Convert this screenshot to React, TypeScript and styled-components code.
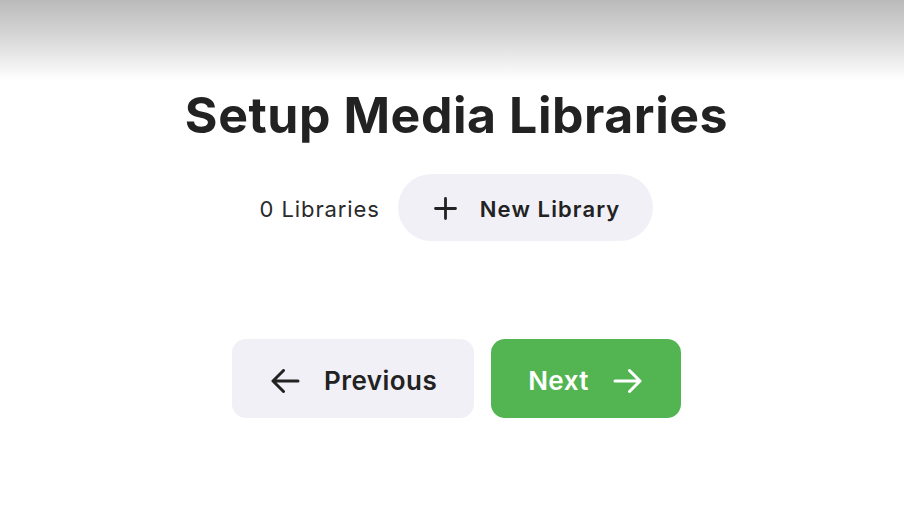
import styled, { createGlobalStyle } from 'styled-components';

const GlobalStyle = createGlobalStyle`
	html, body {
		margin: 0;
		padding: 0;
		background: #ffffff;
		font-family: Inter, 'Noto Sans', sans-serif;
		color: #212121;
	}
`;

const Page = styled.div`
	display: flex;
	flex-direction: column;
	width: 904px;
	height: 528px;
	overflow: hidden;
`;

const TopFade = styled.div`
	height: 80px;
	background: linear-gradient(180deg, #bababa 0%, #d6d6d6 45%, #f4f4f4 85%, #ffffff 100%);
`;

const Content = styled.div`
	display: flex;
	flex-direction: column;
	align-items: center;
	padding-left: 9px;
`;

const Title = styled.h1`
	margin: 6px 0 0 0;
	font-size: 50px;
	line-height: 58px;
	font-weight: 700;
	letter-spacing: 0.55px;
	color: #222222;
`;

const LibraryRow = styled.div`
	display: flex;
	align-items: center;
	gap: 18px;
	margin-top: 30px;
`;

const Count = styled.span`
	padding-top: 2px;
	font-size: 22px;
	letter-spacing: 0.9px;
	color: #2a2a2a;
`;

const Button = styled.button<{ $variant?: 'primary' | 'secondary' }>`
	display: flex;
	align-items: center;
	box-sizing: border-box;
	border: none;
	font-family: inherit;
	font-weight: 600;
	cursor: pointer;
	background: ${(props) => (props.$variant === 'primary' ? '#52b552' : '#f1f0f6')};
	color: ${(props) => (props.$variant === 'primary' ? '#ffffff' : '#222222')};
`;

const PillButton = styled(Button)`
	height: 67px;
	padding: 2px 33px 0 36px;
	gap: 23px;
	border-radius: 34px;
	font-size: 22px;
	letter-spacing: 1.1px;
`;

const NavRow = styled.div`
	display: flex;
	gap: 17px;
	margin-top: 98px;
`;

const NavButton = styled(Button)`
	height: 79px;
	padding: ${(props) => (props.$variant === 'primary' ? '4px 39px 0 37px' : '4px 37px 0 39px')};
	gap: 24px;
	border-radius: 14px;
	font-size: 26px;
	letter-spacing: 0.45px;
`;

const Plus = () => (
	<svg width="23" height="23" viewBox="0 0 23 23" fill="none" stroke="currentColor" strokeWidth="2.8" strokeLinecap="round">
		<path d="M11.5 1.5v20M1.5 11.5h20" />
	</svg>
);

const Arrow = ({ left }: { left?: boolean }) => (
	<svg
		width="29"
		height="24"
		viewBox="0 0 29 24"
		fill="none"
		stroke="currentColor"
		strokeWidth="3"
		strokeLinecap="round"
		strokeLinejoin="round"
		style={left ? { transform: 'scaleX(-1)' } : undefined}
	>
		<path d="M2 12h25M16.5 1.5L27 12 16.5 22.5" />
	</svg>
);

const App = () => {
	return (
		<>
			<GlobalStyle />
			<Page>
				<TopFade />
				<Content>
					<Title>Setup Media Libraries</Title>
					<LibraryRow>
						<Count>0 Libraries</Count>
						<PillButton>
							<Plus />
							New Library
						</PillButton>
					</LibraryRow>
					<NavRow>
						<NavButton>
							<Arrow left />
							Previous
						</NavButton>
						<NavButton $variant="primary">
							Next
							<Arrow />
						</NavButton>
					</NavRow>
				</Content>
			</Page>
		</>
	);
};

export default App;
